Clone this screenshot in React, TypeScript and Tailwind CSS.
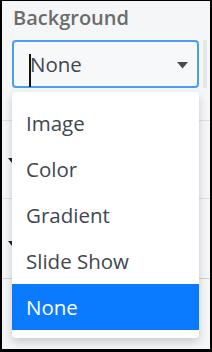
import React from 'react';

const options = ['Image', 'Color', 'Gradient', 'Slide Show', 'None'];

export default function App() {
  const selected = 'None';

  return (
    <div
      className="relative w-[212px] h-[352px] overflow-hidden bg-[#f5f6f8] border-black border-t border-x-2 border-b-[3px]"
      style={{ fontFamily: '"Open Sans", "Noto Sans", sans-serif' }}
    >
      <div className="pl-[11px] pt-[1px] text-[20px] leading-[32px] font-semibold text-[#6c6c6c]">
        Background
      </div>

      <div className="flex items-stretch mt-[6px] pl-[10px]">
        <div className="relative flex items-center w-[187px] h-[48px] rounded-[4px] border-2 border-[#4a9ff5] bg-[#f7f8fa]">
          <span className="absolute left-[15px] top-[12px] w-[1.5px] h-[33px] bg-[#111]" />
          <span className="pl-[16px] text-[20.5px] text-[#3f4750]">{selected}</span>
          <svg className="absolute right-[9px] top-[20px]" width="11" height="7" viewBox="0 0 11 7">
            <path d="M0 0h11L5.5 6.5z" fill="#464b52" />
          </svg>
        </div>
        <div className="ml-[4px] w-[4px] bg-[#e4e6ea]" />
      </div>

      {/* rows behind the menu */}
      <div className="mt-[32px] border-t border-[#dcdfe3] h-[78px] relative">
        <svg className="absolute left-[6px] top-[37px]" width="8" height="5" viewBox="0 0 8 5">
          <path d="M0 0h8L4 5z" fill="#222" />
        </svg>
      </div>
      <div className="border-t border-[#dcdfe3] h-[80px] relative">
        <svg className="absolute left-[6px] top-[42px]" width="8" height="5" viewBox="0 0 8 5">
          <path d="M0 0h8L4 5z" fill="#222" />
        </svg>
      </div>
      <div className="border-t border-[#d0d3d8]" />

      {/* open dropdown */}
      <div className="absolute left-[10px] top-[91px] w-[187px] py-[8px] rounded-[4px] bg-white shadow-[0_4px_10px_rgba(0,0,0,0.18)]">
        {options.map((o) => (
          <div
            key={o}
            className={`h-[46px] flex items-center pl-[14px] text-[20.5px] ${
              o === selected ? 'bg-[#0a7bff] text-white' : 'text-[#3f4750]'
            }`}
          >
            {o}
          </div>
        ))}
      </div>
    </div>
  );
}
